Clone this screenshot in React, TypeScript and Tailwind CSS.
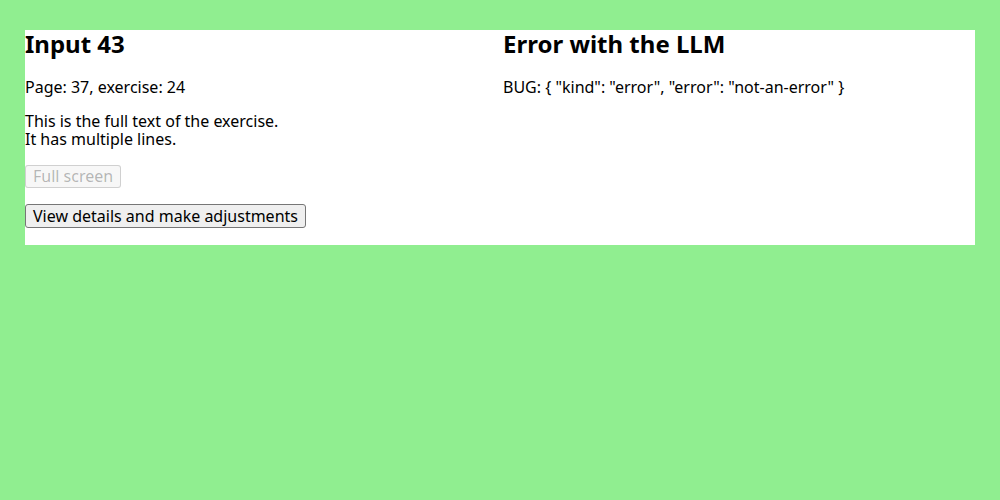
import React from 'react';

const btn =
  'px-[7px] py-[1.5px] rounded-[3px] border border-[#767676] bg-[#efefef] text-black leading-[1.15] text-base';

export default function App(): JSX.Element {
  return (
    <div className="min-h-[500px] bg-[#90ee90] pt-[30px] px-[25px] text-black leading-[1.15]" style={{ fontFamily: '"Noto Sans", sans-serif' }}>
      <div className="bg-white grid grid-cols-2 gap-[6px] pb-[1.5px]">
        <section>
          <h2 className="text-2xl font-bold leading-[1.15] mb-[20px]">Input 43</h2>
          <p className="mb-4">Page: 37, exercise: 24</p>
          <p className="mb-4">
            This is the full text of the exercise.
            <br />
            It has multiple lines.
          </p>
          <div className="mb-4">
            <button className="px-[7px] py-[1.5px] rounded-[3px] border border-[#767676]/30 bg-[#efefef]/50 text-[#101010]/30 leading-[1.15] text-base" disabled>
              Full screen
            </button>
          </div>
          <div className="mb-4">
            <button className={btn}>View details and make adjustments</button>
          </div>
        </section>
        <section>
          <h2 className="text-2xl font-bold leading-[1.15] mb-[20px]">Error with the LLM</h2>
          <p className="mb-4">BUG: {'{ "kind": "error", "error": "not-an-error" }'}</p>
        </section>
      </div>
    </div>
  );
}
